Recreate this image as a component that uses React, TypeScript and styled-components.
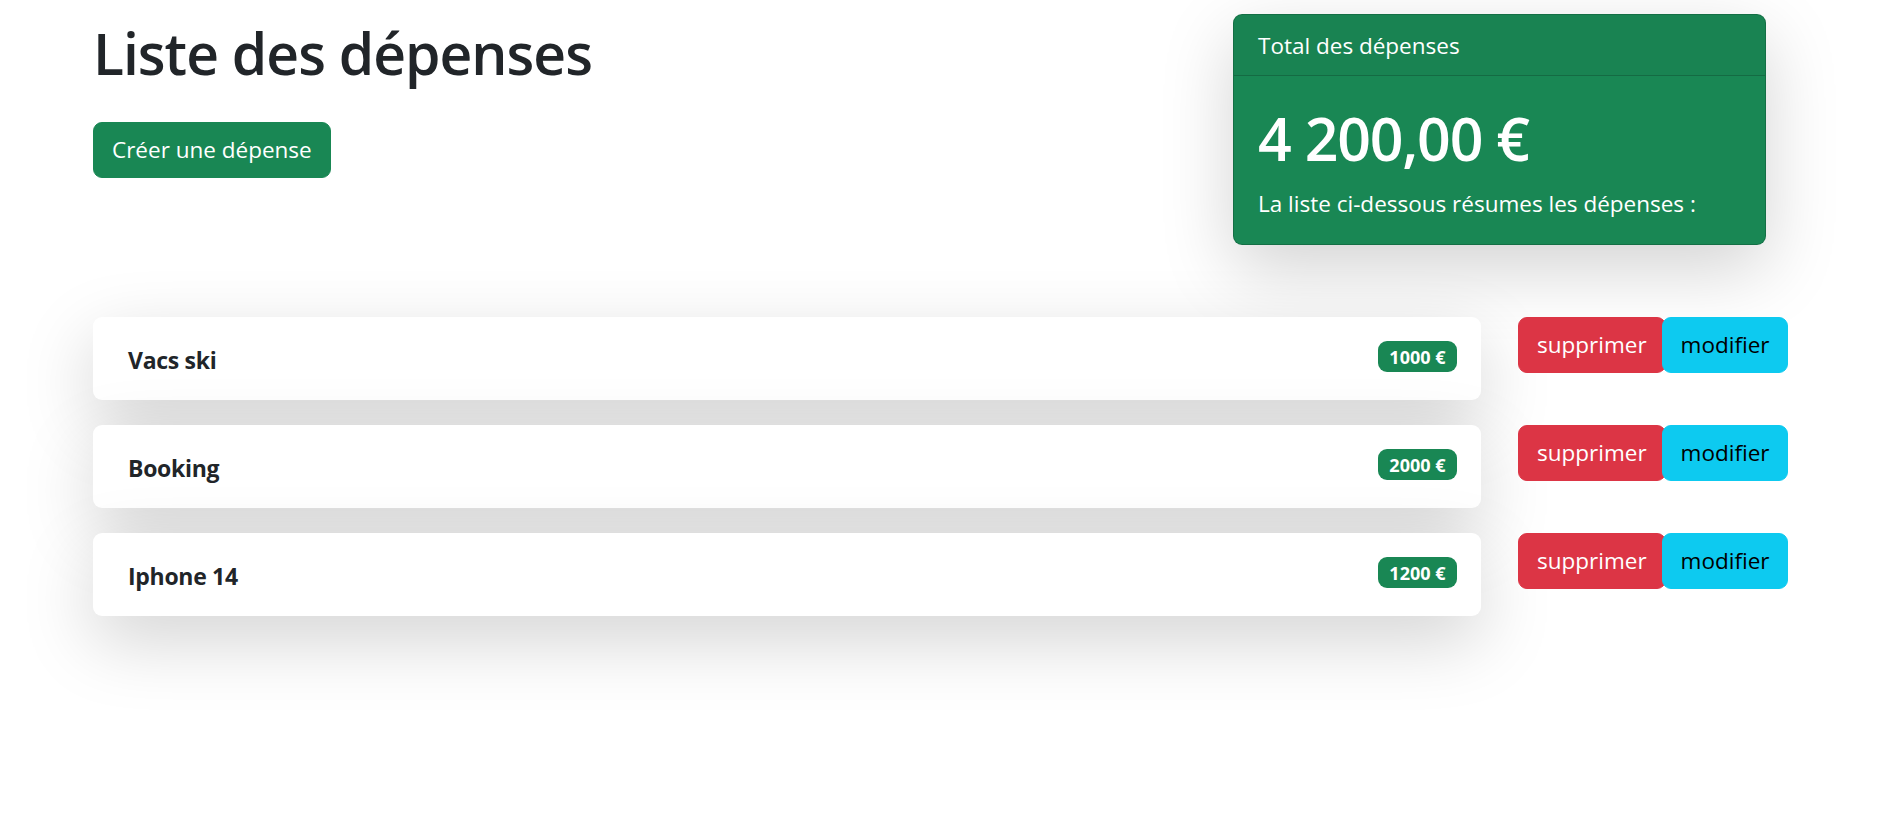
import React from 'react';
import styled, { createGlobalStyle } from 'styled-components';

const GlobalStyle = createGlobalStyle`
  body {
    margin: 0;
    background: #fff;
    color: #212529;
    font-family: "Open Sans", "Noto Sans", sans-serif;
  }
`;

const colors = {
  text: '#212529',
  success: '#198754',
  danger: '#dc3545',
  info: '#0dcaf0',
};

const Page = styled.div`
  width: 1693px;
  min-height: 840px;
  margin-left: 93px;
`;

const TopRow = styled.div`
  display: flex;
  justify-content: space-between;
  align-items: flex-start;
`;

const Intro = styled.div`
  padding-top: 17px;
`;

const Title = styled.h1`
  margin: 0;
  font-size: 57px;
  line-height: 72px;
  font-weight: 600;
  letter-spacing: -1px;
  color: ${colors.text};
`;

const Button = styled.button<{ $variant: 'success' | 'danger' | 'info' }>`
  font-family: inherit;
  font-size: 22.5px;
  line-height: 36px;
  padding: 9px 18px;
  border-radius: 9px;
  border: 1.5px solid ${(p) => colors[p.$variant]};
  background: ${(p) => colors[p.$variant]};
  color: ${(p) => (p.$variant === 'info' ? '#000' : '#fff')};
  cursor: pointer;
`;

const CreateButton = styled(Button)`
  margin-top: 33px;
`;

const TotalCard = styled.div`
  box-sizing: border-box;
  width: 533px;
  margin-top: 14px;
  margin-right: 20px;
  background: ${colors.success};
  color: #fff;
  border: 1.5px solid rgba(0, 0, 0, 0.175);
  border-radius: 9px;
  box-shadow: 0 24px 72px rgba(0, 0, 0, 0.175);
  overflow: hidden;
`;

const CardHeader = styled.div`
  padding: 13px 24px 11px;
  font-size: 22.5px;
  line-height: 36px;
  background: rgba(33, 37, 41, 0.03);
  border-bottom: 1.5px solid rgba(0, 0, 0, 0.175);
`;

const CardBody = styled.div`
  padding: 26px 24px 22px;
`;

const Amount = styled.div`
  font-size: 59px;
  line-height: 72px;
  font-weight: 600;
  letter-spacing: -1.2px;
  margin-bottom: 12px;
`;

const CardText = styled.p`
  margin: 0;
  font-size: 22.5px;
  line-height: 36px;
`;

const List = styled.div`
  margin-top: 72px;
`;

const Row = styled.div`
  display: flex;
  align-items: flex-start;
  gap: 37px;
  margin-bottom: 25px;
`;

const Item = styled.div`
  flex: none;
  width: 1388px;
  height: 83px;
  box-sizing: border-box;
  padding: 0 24px 0 35px;
  display: flex;
  align-items: center;
  justify-content: space-between;
  background: #fff;
  border-radius: 9px;
  box-shadow: 0 24px 72px rgba(0, 0, 0, 0.175);
`;

const ItemName = styled.span`
  font-size: 23px;
  font-weight: 700;
  letter-spacing: -0.3px;
  color: ${colors.text};
  margin-top: 3px;
`;

const Badge = styled.span`
  background: ${colors.success};
  color: #fff;
  font-size: 18px;
  font-weight: 700;
  line-height: 1;
  padding: 6.5px 11.5px;
  border-radius: 9px;
  margin-top: -4px;
`;

const Actions = styled.div`
  display: flex;
  flex: none;
`;

const EditButton = styled(Button)`
  margin-left: -4px;
`;

const expenses = [
  { name: 'Vacs ski', amount: 1000 },
  { name: 'Booking', amount: 2000 },
  { name: 'Iphone 14', amount: 1200 },
];

export default function App() {
  return (
    <>
      <GlobalStyle />
      <Page>
        <TopRow>
          <Intro>
            <Title>Liste des dépenses</Title>
            <CreateButton $variant="success">Créer une dépense</CreateButton>
          </Intro>
          <TotalCard>
            <CardHeader>Total des dépenses</CardHeader>
            <CardBody>
              <Amount>4 200,00 €</Amount>
              <CardText>La liste ci-dessous résumes les dépenses :</CardText>
            </CardBody>
          </TotalCard>
        </TopRow>
        <List>
          {expenses.map((e) => (
            <Row key={e.name}>
              <Item>
                <ItemName>{e.name}</ItemName>
                <Badge>{e.amount} €</Badge>
              </Item>
              <Actions>
                <Button $variant="danger">supprimer</Button>
                <EditButton $variant="info">modifier</EditButton>
              </Actions>
            </Row>
          ))}
        </List>
      </Page>
    </>
  );
}
